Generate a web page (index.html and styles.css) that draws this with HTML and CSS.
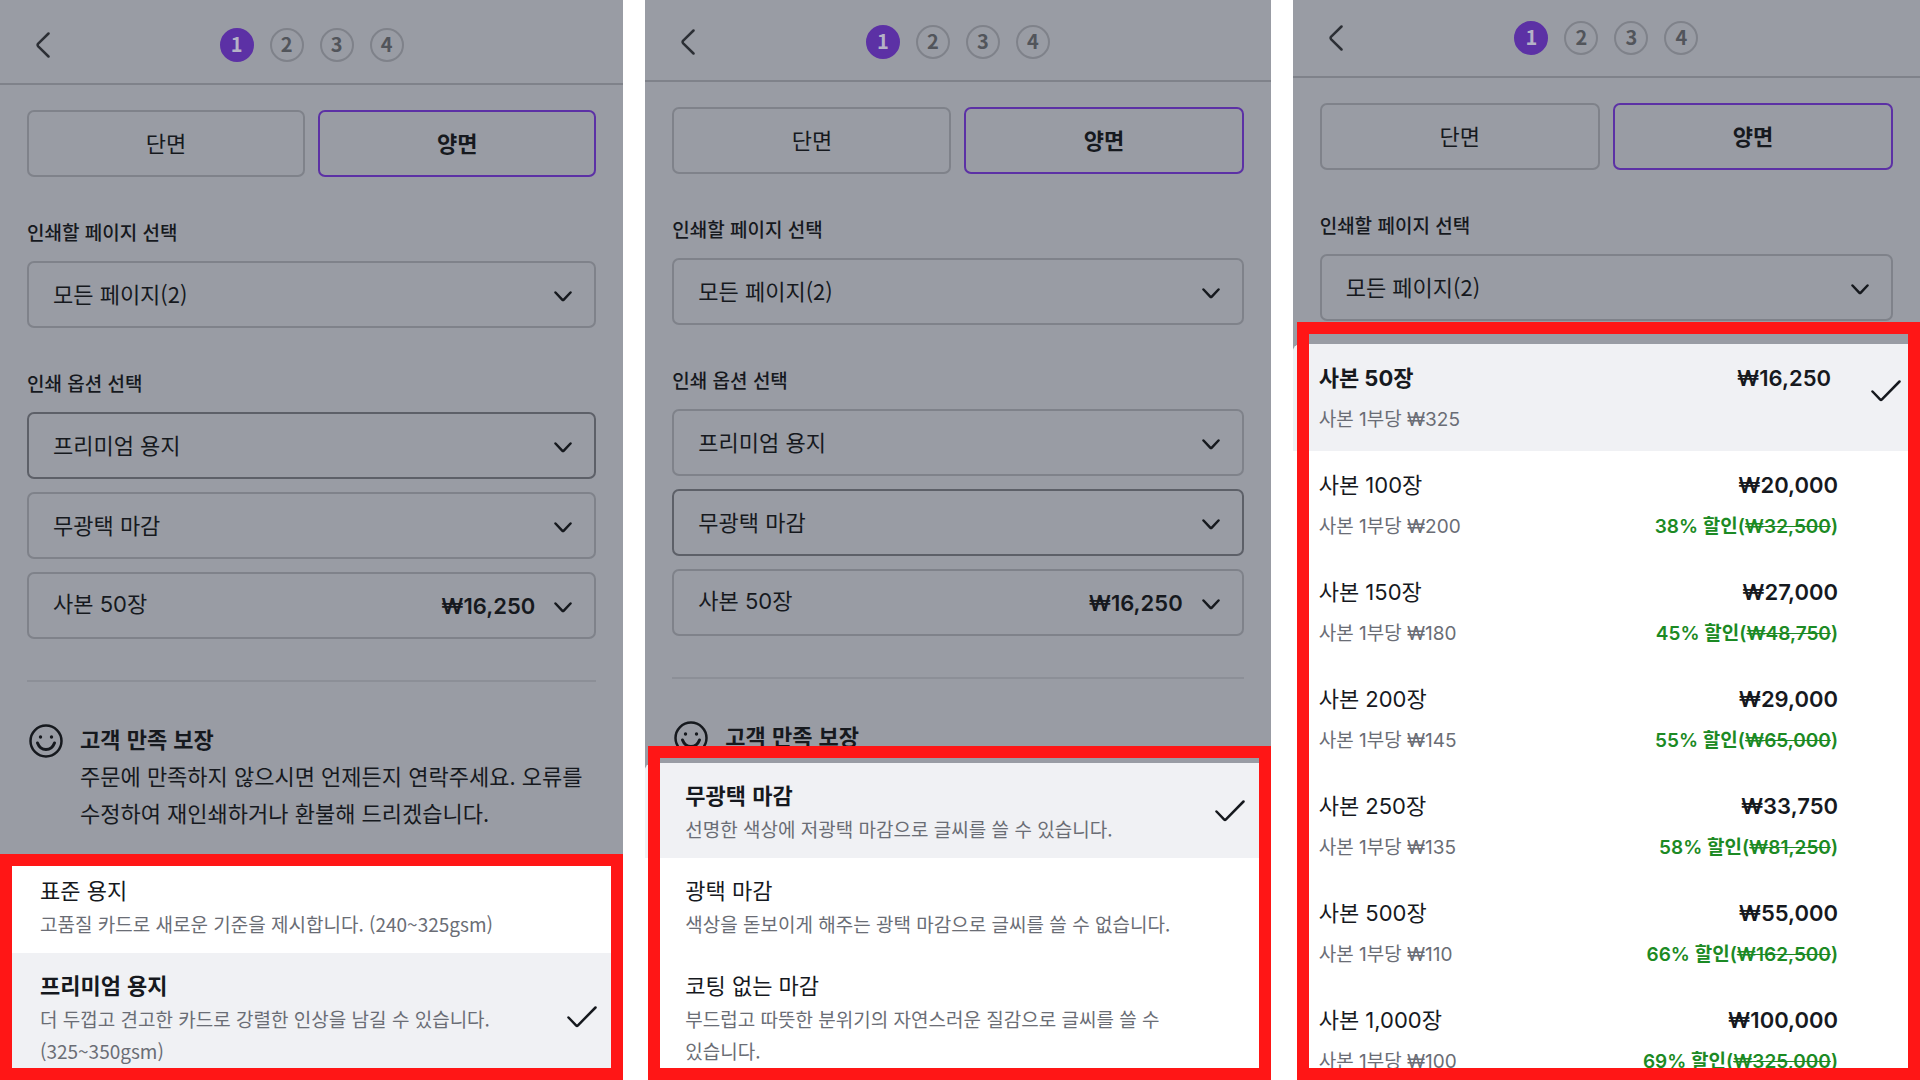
FILE: index.html
```html
<!DOCTYPE html>
<html lang="ko">
<head>
    <meta charset="UTF-8">
    <meta name="viewport" content="width=device-width, initial-scale=1.0">
    <title>인쇄 옵션 선택</title>
    <link rel="stylesheet" href="styles.css">
</head>
<body>

    <!-- Shared icons -->
    <svg class="icon-defs" aria-hidden="true">
        <symbol id="icon-back" viewBox="0 0 14 26">
            <path d="M12.5 1.5 L2.2 11.6 Q1 13 2.2 14.4 L12.5 24.5" />
        </symbol>
        <symbol id="icon-down" viewBox="0 0 18 11">
            <path d="M1.5 1.5 L8.2 8.6 Q9 9.4 9.8 8.6 L16.5 1.5" />
        </symbol>
        <symbol id="icon-check" viewBox="0 0 30 22">
            <path d="M1.5 11.5 L9.3 19.6 Q10 20.3 10.7 19.6 L28.5 1.5" />
        </symbol>
        <symbol id="icon-smile" viewBox="0 0 34 34">
            <circle cx="17" cy="17" r="15.5" />
            <path class="mouth" d="M8.5 19 Q11 25.5 17 25.5 Q23 25.5 25.5 19" />
            <circle class="eye" cx="11.5" cy="13" r="1.7" />
            <circle class="eye" cx="22.5" cy="13" r="1.7" />
        </symbol>
    </svg>

    <main class="screens">

        <!-- Paper -->
        <section class="screen screen-paper">
            <header class="topbar">
                <button class="back" type="button" aria-label="뒤로"><svg class="icon"><use href="#icon-back" /></svg></button>
                <ol class="steps">
                    <li class="step current">1</li>
                    <li class="step">2</li>
                    <li class="step">3</li>
                    <li class="step">4</li>
                </ol>
            </header>
            <form class="options">
                <div class="sides">
                    <button class="side" type="button">단면</button>
                    <button class="side selected" type="button">양면</button>
                </div>
                <label class="field-label" for="pages1">인쇄할 페이지 선택</label>
                <div class="field">
                    <select id="pages1"><option>모든 페이지(2)</option></select>
                    <span class="field-end"><svg class="icon chevron"><use href="#icon-down" /></svg></span>
                </div>
                <label class="field-label" for="paper1">인쇄 옵션 선택</label>
                <div class="field-group">
                    <div class="field open">
                        <select id="paper1"><option>프리미엄 용지</option></select>
                        <span class="field-end"><svg class="icon chevron"><use href="#icon-down" /></svg></span>
                    </div>
                    <div class="field">
                        <select aria-label="마감"><option>무광택 마감</option></select>
                        <span class="field-end"><svg class="icon chevron"><use href="#icon-down" /></svg></span>
                    </div>
                    <div class="field quantity">
                        <select aria-label="수량"><option>사본 50장</option></select>
                        <span class="field-end"><b class="field-price">₩16,250</b><svg class="icon chevron"><use href="#icon-down" /></svg></span>
                    </div>
                </div>
            </form>
            <div class="guarantee">
                <svg class="icon smile" aria-hidden="true"><use href="#icon-smile" /></svg>
                <div class="guarantee-text">
                    <h2>고객 만족 보장</h2>
                    <p>주문에 만족하지 않으시면 언제든지 연락주세요. 오류를 수정하여 재인쇄하거나 환불해 드리겠습니다.</p>
                </div>
            </div>
            <div class="sheet">
                <div class="sheet-list">
                    <button class="item" type="button">
                        <span class="item-text">
                            <span class="item-title">표준 용지</span>
                            <span class="item-note">고품질 카드로 새로운 기준을 제시합니다. (240~325gsm)</span>
                        </span>
                    </button>
                    <button class="item selected" type="button">
                        <span class="item-text">
                            <span class="item-title">프리미엄 용지</span>
                            <span class="item-note">더 두껍고 견고한 카드로 강렬한 인상을 남길 수 있습니다. (325~350gsm)</span>
                        </span>
                        <svg class="icon check"><use href="#icon-check" /></svg>
                    </button>
                </div>
                <div class="highlight"></div>
            </div>
        </section>

        <!-- Finish -->
        <section class="screen screen-finish">
            <header class="topbar">
                <button class="back" type="button" aria-label="뒤로"><svg class="icon"><use href="#icon-back" /></svg></button>
                <ol class="steps">
                    <li class="step current">1</li>
                    <li class="step">2</li>
                    <li class="step">3</li>
                    <li class="step">4</li>
                </ol>
            </header>
            <form class="options">
                <div class="sides">
                    <button class="side" type="button">단면</button>
                    <button class="side selected" type="button">양면</button>
                </div>
                <label class="field-label" for="pages2">인쇄할 페이지 선택</label>
                <div class="field">
                    <select id="pages2"><option>모든 페이지(2)</option></select>
                    <span class="field-end"><svg class="icon chevron"><use href="#icon-down" /></svg></span>
                </div>
                <label class="field-label" for="paper2">인쇄 옵션 선택</label>
                <div class="field-group">
                    <div class="field">
                        <select id="paper2"><option>프리미엄 용지</option></select>
                        <span class="field-end"><svg class="icon chevron"><use href="#icon-down" /></svg></span>
                    </div>
                    <div class="field open">
                        <select aria-label="마감"><option>무광택 마감</option></select>
                        <span class="field-end"><svg class="icon chevron"><use href="#icon-down" /></svg></span>
                    </div>
                    <div class="field quantity">
                        <select aria-label="수량"><option>사본 50장</option></select>
                        <span class="field-end"><b class="field-price">₩16,250</b><svg class="icon chevron"><use href="#icon-down" /></svg></span>
                    </div>
                </div>
            </form>
            <div class="guarantee">
                <svg class="icon smile" aria-hidden="true"><use href="#icon-smile" /></svg>
                <div class="guarantee-text">
                    <h2>고객 만족 보장</h2>
                </div>
            </div>
            <div class="sheet">
                <div class="sheet-list">
                    <button class="item selected" type="button">
                        <span class="item-text">
                            <span class="item-title">무광택 마감</span>
                            <span class="item-note">선명한 색상에 저광택 마감으로 글씨를 쓸 수 있습니다.</span>
                        </span>
                        <svg class="icon check"><use href="#icon-check" /></svg>
                    </button>
                    <button class="item" type="button">
                        <span class="item-text">
                            <span class="item-title">광택 마감</span>
                            <span class="item-note">색상을 돋보이게 해주는 광택 마감으로 글씨를 쓸 수 없습니다.</span>
                        </span>
                    </button>
                    <button class="item" type="button">
                        <span class="item-text">
                            <span class="item-title">코팅 없는 마감</span>
                            <span class="item-note">부드럽고 따뜻한 분위기의 자연스러운 질감으로 글씨를 쓸 수 있습니다.</span>
                        </span>
                    </button>
                </div>
                <div class="highlight"></div>
            </div>
        </section>

        <!-- Quantity -->
        <section class="screen screen-quantity">
            <header class="topbar">
                <button class="back" type="button" aria-label="뒤로"><svg class="icon"><use href="#icon-back" /></svg></button>
                <ol class="steps">
                    <li class="step current">1</li>
                    <li class="step">2</li>
                    <li class="step">3</li>
                    <li class="step">4</li>
                </ol>
            </header>
            <form class="options">
                <div class="sides">
                    <button class="side" type="button">단면</button>
                    <button class="side selected" type="button">양면</button>
                </div>
                <label class="field-label" for="pages3">인쇄할 페이지 선택</label>
                <div class="field">
                    <select id="pages3"><option>모든 페이지(2)</option></select>
                    <span class="field-end"><svg class="icon chevron"><use href="#icon-down" /></svg></span>
                </div>
            </form>
            <div class="sheet">
                <div class="sheet-list">
                    <button class="item selected" type="button">
                        <span class="item-text">
                            <span class="item-title">사본 50장</span>
                            <span class="item-note">사본 1부당 ₩325</span>
                        </span>
                        <span class="item-price"><b>₩16,250</b></span>
                        <svg class="icon check"><use href="#icon-check" /></svg>
                    </button>
                    <button class="item" type="button">
                        <span class="item-text">
                            <span class="item-title">사본 100장</span>
                            <span class="item-note">사본 1부당 ₩200</span>
                        </span>
                        <span class="item-price"><b>₩20,000</b><span class="sale">38% 할인(<s>₩32,500</s>)</span></span>
                    </button>
                    <button class="item" type="button">
                        <span class="item-text">
                            <span class="item-title">사본 150장</span>
                            <span class="item-note">사본 1부당 ₩180</span>
                        </span>
                        <span class="item-price"><b>₩27,000</b><span class="sale">45% 할인(<s>₩48,750</s>)</span></span>
                    </button>
                    <button class="item" type="button">
                        <span class="item-text">
                            <span class="item-title">사본 200장</span>
                            <span class="item-note">사본 1부당 ₩145</span>
                        </span>
                        <span class="item-price"><b>₩29,000</b><span class="sale">55% 할인(<s>₩65,000</s>)</span></span>
                    </button>
                    <button class="item" type="button">
                        <span class="item-text">
                            <span class="item-title">사본 250장</span>
                            <span class="item-note">사본 1부당 ₩135</span>
                        </span>
                        <span class="item-price"><b>₩33,750</b><span class="sale">58% 할인(<s>₩81,250</s>)</span></span>
                    </button>
                    <button class="item" type="button">
                        <span class="item-text">
                            <span class="item-title">사본 500장</span>
                            <span class="item-note">사본 1부당 ₩110</span>
                        </span>
                        <span class="item-price"><b>₩55,000</b><span class="sale">66% 할인(<s>₩162,500</s>)</span></span>
                    </button>
                    <button class="item" type="button">
                        <span class="item-text">
                            <span class="item-title">사본 1,000장</span>
                            <span class="item-note">사본 1부당 ₩100</span>
                        </span>
                        <span class="item-price"><b>₩100,000</b><span class="sale">69% 할인(<s>₩325,000</s>)</span></span>
                    </button>
                </div>
                <div class="highlight"></div>
            </div>
        </section>

    </main>
</body>
</html>
```
FILE: styles.css
```css
/* Basic Reset */
* {
    margin: 0;
    padding: 0;
    box-sizing: border-box;
}

body {
    font-family: "Noto Sans CJK KR", sans-serif;
    font-size: 22px;
    color: #16191e;
    background: #fff;
}

button,
select {
    font: inherit;
    color: inherit;
    background: none;
    border: none;
    cursor: pointer;
}

/* Icons */
.icon-defs {
    display: none;
}

.icon {
    display: block;
    flex: none;
    fill: none;
    stroke: currentColor;
    stroke-width: 2.5;
    stroke-linecap: round;
    stroke-linejoin: round;
}

.chevron {
    width: 18px;
    height: 11px;
}

.check {
    width: 30px;
    height: 22px;
}

.smile {
    width: 34px;
    height: 34px;
}

.mouth {
    stroke-width: 3;
}

.eye {
    fill: currentColor;
    stroke: none;
}

/* Screens side by side */
.screens {
    display: grid;
    grid-template-columns: 623fr 625fr 627fr;
    column-gap: 22px;
    height: 100vh;
}

.screen {
    position: relative;
    min-width: 0;
    overflow: hidden;
    background: #999ca4;
}

/* Top bar */
.topbar {
    display: grid;
    grid-template-columns: 1fr auto 1fr;
    align-items: center;
    padding: 28px 36px 21px;
    border-bottom: 2px solid #7f828a;
}

.screen-finish .topbar {
    padding-top: 25px;
}

.screen-quantity .topbar {
    padding-top: 21px;
}

.back {
    justify-self: start;
    color: #2c2f35;
}

.back .icon {
    width: 14px;
    height: 26px;
}

.steps {
    display: flex;
    gap: 16px;
    list-style: none;
}

.step {
    width: 34px;
    height: 34px;
    padding-bottom: 2px;
    border: 2px solid #7f828a;
    border-radius: 50%;
    font-size: 20px;
    font-weight: bold;
    line-height: 28px;
    text-align: center;
    color: #52555b;
}

.step.current {
    color: #b4b2c6;
    background: #5c31a5;
    border-color: #5c31a5;
}

/* Option form */
.options {
    margin: 0 27px;
    padding: 25px 0 41px;
    border-bottom: 2px solid #8c8f97;
}

.sides {
    display: grid;
    grid-template-columns: 1fr 1fr;
    gap: 13px;
}

.side {
    height: 67px;
    padding-bottom: 3px;
    border: 2px solid #7f828a;
    border-radius: 7px;
}

.side.selected {
    font-weight: bold;
    border-color: #5c31a5;
}

.field-label {
    display: block;
    margin: 40px 0 14px;
    font-size: 19px;
    font-weight: 500;
    line-height: 30px;
}

.field-group {
    display: grid;
    gap: 13px;
}

.field {
    display: grid;
    align-items: center;
}

.field select {
    grid-area: 1 / 1;
    width: 100%;
    height: 67px;
    padding: 0 24px 3px;
    border: 2px solid #7f828a;
    border-radius: 7px;
    appearance: none;
}

.field.open select {
    border-color: #5d6068;
}

.field-end {
    grid-area: 1 / 1;
    justify-self: end;
    display: flex;
    align-items: center;
    gap: 19px;
    padding-right: 24px;
    pointer-events: none;
}

.field-end .chevron {
    margin-top: 3px;
}

/* Numbers */
.quantity select,
.field-price,
.screen-quantity .item {
    font-family: Inter, "Noto Sans CJK KR", sans-serif;
}

.field-price,
.item-price b {
    font-weight: 600;
}

/* Guarantee */
.guarantee {
    display: flex;
    gap: 17px;
    padding: 38px 26px 0 29px;
}

.guarantee .smile {
    margin-top: 4px;
}

.guarantee h2,
.guarantee p {
    font-size: 22px;
    line-height: 37px;
    word-break: keep-all;
}

.guarantee h2 {
    font-weight: bold;
}

/* Bottom sheet */
.sheet {
    position: absolute;
    left: 0;
    right: 0;
    bottom: 0;
}

.sheet-list {
    height: 100%;
    overflow: hidden;
    background: #fff;
    border-radius: 8px 8px 0 0;
}

.item {
    display: flex;
    align-items: center;
    gap: 40px;
    width: 100%;
    padding: 13px 26px 13px 40px;
    text-align: left;
}

.item.selected {
    background: #f0f1f4;
}

.item-text {
    display: grid;
    flex: 1;
    padding-right: 60px;
    word-break: keep-all;
}

.item.selected .item-text {
    padding-right: 0;
}

.item-title,
.item-price b {
    line-height: 37px;
}

.item.selected .item-title {
    font-weight: bold;
}

.item-note,
.sale {
    font-size: 19px;
    line-height: 32px;
}

.item-note {
    color: #6a6d75;
}

/* Quantity sheet has prices and taller rows */
.screen-quantity .sheet {
    height: calc(100% - 344px);
}

.screen-quantity .item {
    align-items: start;
    padding: 16px 82px 15px 26px;
}

.screen-quantity .item.selected {
    padding-right: 19px;
}

.screen-quantity .item-text {
    padding-right: 0;
}

.screen-quantity .item-text,
.item-price {
    display: grid;
    gap: 7px;
}

.screen-quantity .check {
    align-self: center;
    margin-bottom: 14px;
}

.item-price {
    text-align: right;
}

.sale {
    font-weight: 600;
    color: #1c8a24;
}

/* Red highlight around the sheet */
.highlight {
    position: absolute;
    inset: -4px 0 0;
    border: 12px solid #ff1616;
    pointer-events: none;
}

.screen-finish .highlight {
    inset: -17px 0 0 3px;
}

.screen-quantity .highlight {
    inset: -22px 0 0 4px;
}
```
